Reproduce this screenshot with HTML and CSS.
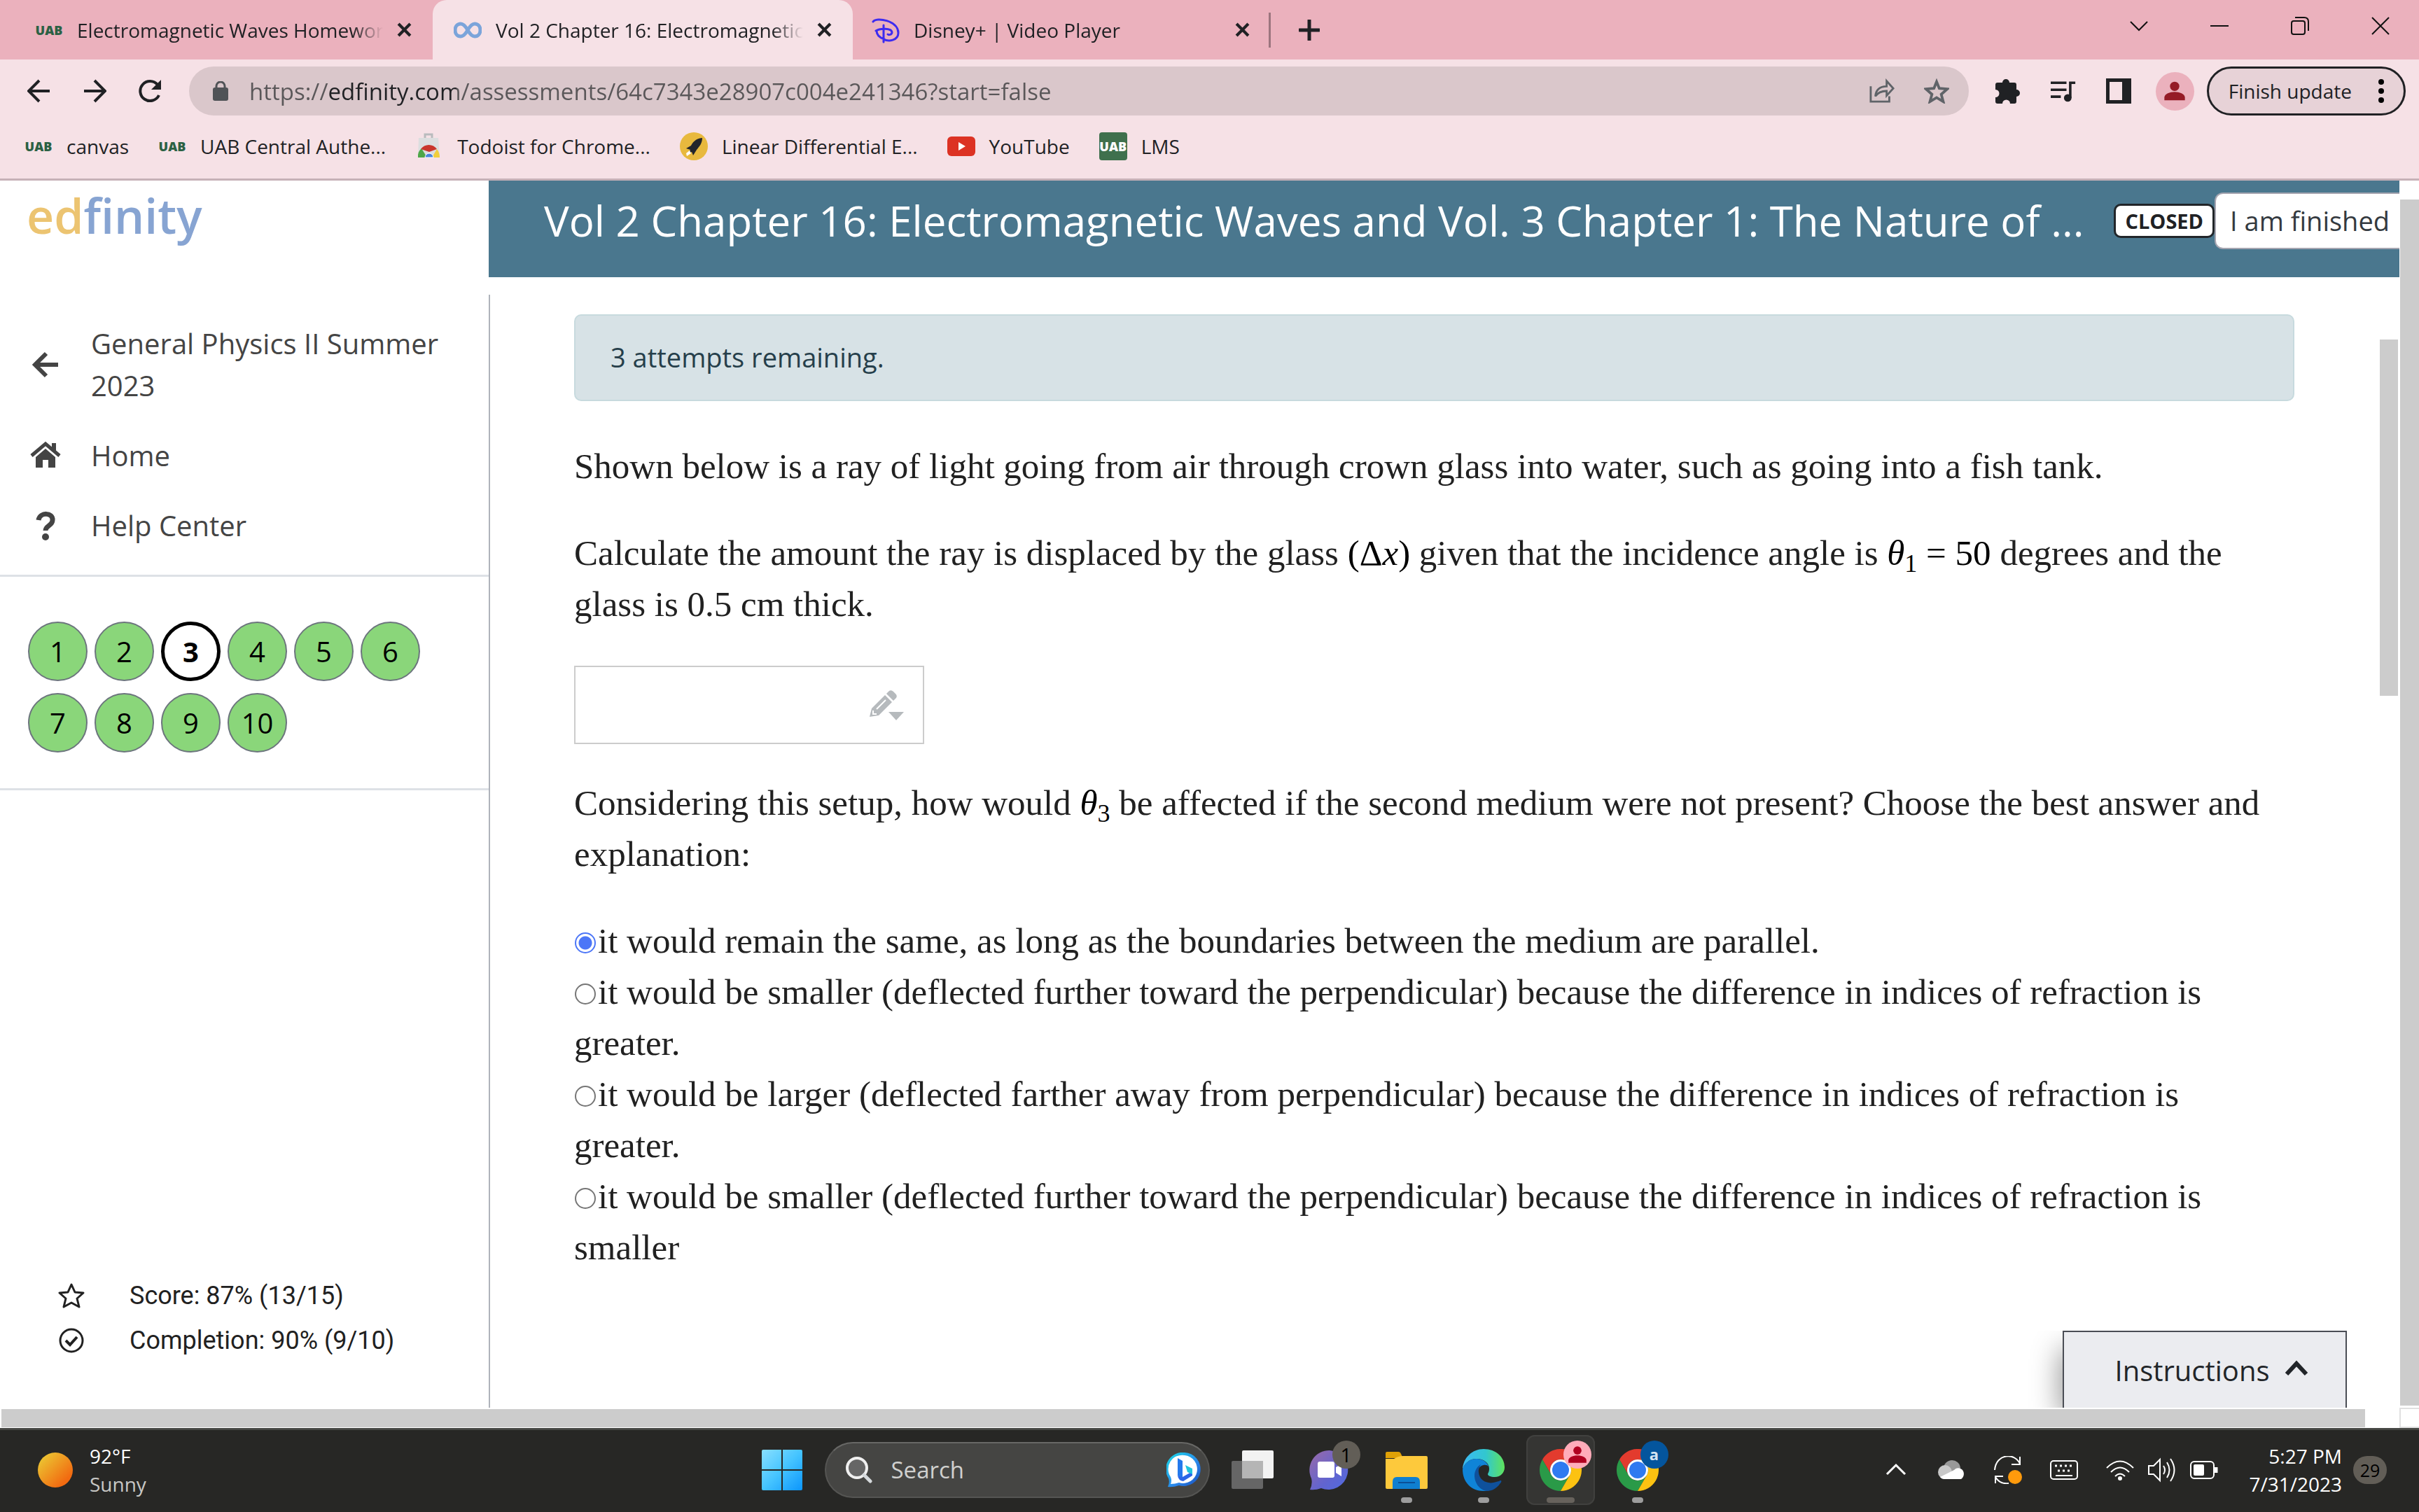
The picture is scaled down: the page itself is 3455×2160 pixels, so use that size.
FILE: index.html
```html
<!DOCTYPE html>
<html lang="en">
<head>
    <meta charset="UTF-8">
    <meta name="viewport" content="width=device-width, initial-scale=1.0">
    <title>Vol 2 Chapter 16: Electromagnetic Waves</title>
    <link rel="stylesheet" href="styles.css">
</head>
<body>
    <!-- Shared icons -->
    <svg class="sprite" aria-hidden="true">
        <symbol id="i-close" viewBox="0 0 20 20"><path d="M2 2l16 16M18 2L2 18" fill="none" stroke="#202124" stroke-width="4"/></symbol>
        <symbol id="i-chrome" viewBox="0 0 60 60">
            <path d="M4 15A30 30 0 0 1 56 15H30A15 15 0 0 0 17 37.500z" fill="#e33b2e"/>
            <path d="M4 15L17 37.500A15 15 0 0 0 43 37.500L30 60A30 30 0 0 1 4 15z" fill="#2a9a48"/>
            <path d="M56 15H30A15 15 0 0 1 43 37.500L30 60A30 30 0 0 0 56 15z" fill="#fcc211"/>
            <circle cx="30" cy="30" r="15" fill="#fff"/><circle cx="30" cy="30" r="12" fill="#2f7af0"/>
        </symbol>
        <symbol id="i-person" viewBox="0 0 24 24"><circle cx="12" cy="7" r="5"/><path d="M1 22v-3c0-4 6-6 11-6s11 2 11 6v3z"/></symbol>
    </svg>

    <header class="browser">
        <div class="tabs">
            <div class="tab">
                <span class="uab">UAB</span>
                <span class="tab-title">Electromagnetic Waves Homework</span>
                <button class="tab-close" aria-label="Close tab"><svg><use href="#i-close"/></svg></button>
            </div>
            <div class="tab active">
                <svg class="fav" viewBox="0 0 40 40"><path d="M20 20c-4-7-7-9-10-9-5 0-8 4-8 9s3 9 8 9c3 0 6-2 10-9s7-9 10-9c5 0 8 4 8 9s-3 9-8 9c-3 0-6-2-10-9z" fill="none" stroke="#7ba4da" stroke-width="5"/></svg>
                <span class="tab-title">Vol 2 Chapter 16: Electromagnetic Waves</span>
                <button class="tab-close" aria-label="Close tab"><svg><use href="#i-close"/></svg></button>
            </div>
            <div class="tab">
                <svg class="fav" viewBox="0 0 40 40"><path d="M2 8C6 1 38 6 38 24c0 11-14 13-21 9M6 21c6-4 22-4 23 2 0 4-5 4-6 3M7 21c0 6 5 10 11 12M17 13v24" fill="none" stroke="#3d2bf0" stroke-width="3" stroke-linecap="round"/></svg>
                <span class="tab-title">Disney+ | Video Player</span>
                <button class="tab-close" aria-label="Close tab"><svg><use href="#i-close"/></svg></button>
            </div>
            <button class="new-tab" aria-label="New tab"><svg viewBox="0 0 30 30"><path d="M15 1v28M1 15h28" stroke="#202124" stroke-width="5" stroke-linecap="round"/></svg></button>
            <div class="window-buttons">
                <button aria-label="Search tabs"><svg viewBox="0 0 26 26"><path d="M1 7l12 12L25 7"/></svg></button>
                <button aria-label="Minimize"><svg viewBox="0 0 26 26"><path d="M0 13h26"/></svg></button>
                <button aria-label="Restore"><svg viewBox="0 0 26 26"><rect x="1" y="6" width="19" height="19" rx="3"/><path d="M6 1h13q6 0 6 6v13"/></svg></button>
                <button aria-label="Close"><svg viewBox="0 0 26 26"><path d="M1 1l24 24M25 1L1 25"/></svg></button>
            </div>
        </div>

        <div class="toolbar">
            <button class="tool nav" aria-label="Back"><svg viewBox="0 0 34 34"><path d="M32 17H3M17 2L2 17l15 15" fill="none" stroke="#202124" stroke-width="4"/></svg></button>
            <button class="tool nav" aria-label="Forward"><svg viewBox="0 0 34 34"><path d="M2 17h29M17 2l15 15-15 15" fill="none" stroke="#202124" stroke-width="4"/></svg></button>
            <button class="tool nav" aria-label="Reload"><svg viewBox="0 0 34 34"><path d="M30 23A14 14 0 1 1 28 8" fill="none" stroke="#202124" stroke-width="4"/><path d="M33 1v14H19z" fill="#202124"/></svg></button>
            <div class="address">
                <svg class="lock" viewBox="0 0 22 28"><rect y="9" width="22" height="19" rx="3" fill="#505357"/><path d="M5 11V7a6 6 0 0 1 12 0v4" fill="none" stroke="#505357" stroke-width="3"/></svg>
                <input class="url" type="text" aria-label="Address" value="https://edfinity.com/assessments/64c7343e28907c004e241346?start=false">
                <button class="tool grey" aria-label="Share"><svg viewBox="0 0 38 36"><path d="M2 11v23h28v-8M9 26c1-11 8-15 17-15V3l10 11-10 11v-7c-8 0-13 2-17 8z" fill="none" stroke="#5f6368" stroke-width="3"/></svg></button>
                <button class="tool grey" aria-label="Bookmark"><svg viewBox="0 0 38 36"><path d="M19 4l4 10 12 1-9 8 3 11-10-6-10 6 3-11-9-8 12-1z" fill="none" stroke="#5f6368" stroke-width="4"/></svg></button>
            </div>
            <div class="extensions">
                <button class="tool" aria-label="Extensions"><svg viewBox="0 0 36 36"><path d="M10 6a5 5 0 0 1 10 0h7q3 0 3 3v7a5 5 0 0 1 0 10v7q0 3-3 3h-6a5 5 0 0 0-11 0H3q-3 0-3-3v-6a5 5 0 0 0 0-11V9q0-3 3-3z" fill="#202124"/></svg></button>
                <button class="tool" aria-label="Media"><svg viewBox="0 0 40 36"><path d="M0 5h25M0 16h25M0 27h16" stroke="#202124" stroke-width="4"/><path d="M31 29V5h8" fill="none" stroke="#202124" stroke-width="4"/><circle cx="27" cy="29" r="6" fill="#202124"/></svg></button>
                <button class="tool" aria-label="Side panel"><svg viewBox="0 0 36 36"><path d="M0 0h36v36H0zM5 5v26h18V5z" fill="#202124" fill-rule="evenodd"/></svg></button>
                <button class="avatar" aria-label="Profile"><svg viewBox="0 0 24 24"><use href="#i-person"/></svg></button>
            </div>
            <button class="update">Finish update<svg viewBox="0 0 8 34"><circle cx="4" cy="4" r="4"/><circle cx="4" cy="17" r="4"/><circle cx="4" cy="30" r="4"/></svg></button>
        </div>

        <nav class="bookmarks">
            <a href="#"><span class="uab">UAB</span>canvas</a>
            <a href="#"><span class="uab">UAB</span>UAB Central Authe...</a>
            <a href="#"><svg class="fav" viewBox="0 0 40 40"><path d="M14 8V3h10v5" fill="none" stroke="#b9bbbd" stroke-width="3"/><path d="M5 8h28l2 28H4z" fill="#dcdedf"/><path d="M4 36a15 15 0 0 1 5-13l8 13z" fill="#4fa648"/><path d="M8 24a14 14 0 0 1 23 0l-11 4z" fill="#c9362c"/><path d="M31 24q4 5 4 12H24z" fill="#f0ce3c"/><path d="M14 36a6 6 0 0 1 12 0z" fill="#4b86dd" stroke="#fff"/></svg>Todoist for Chrome...</a>
            <a href="#"><svg class="fav" viewBox="0 0 40 40"><circle cx="20" cy="20" r="20" fill="#e8b93e"/><path d="M32 8C22 9 18 15 16 19l-7 4 6 2-3 5 5-2 2 5 5-8c4-5 8-9 8-17z" fill="#23252b"/><path d="M9 30l5-4 2 4-6 4z" fill="#fff"/></svg>Linear Differential E...</a>
            <a href="#"><svg class="fav" viewBox="0 0 40 40"><rect y="6" width="40" height="28" rx="6" fill="#dc3223"/><path d="M16 14l10 6-10 6z" fill="#fff"/></svg>YouTube</a>
            <a href="#"><span class="uab tile">UAB</span>LMS</a>
        </nav>
    </header>

    <div class="page">
        <div class="site">
            <aside class="sidebar">
                <a class="logo" href="#"><span>ed</span>finity</a>
                <div class="side-body">
                    <nav class="side-nav">
                        <a href="#"><svg viewBox="0 0 44 44"><path d="M40 22H8M23 6L7 22l16 16" fill="none" stroke="#444" stroke-width="6"/></svg>General Physics II Summer 2023</a>
                        <a href="#"><svg viewBox="0 0 44 44"><path d="M2 22L22 5l20 17" fill="none" stroke="#444" stroke-width="5"/><path d="M31 4h6v12l-6-5zM8 24l14-12 14 12v15H26V28h-8v11H8z" fill="#444"/></svg>Home</a>
                        <a href="#"><svg viewBox="0 0 44 44"><path d="M12 14c2-12 21-11 20 0 0 8-10 8-10 15" fill="none" stroke="#444" stroke-width="7"/><circle cx="22" cy="38" r="5" fill="#444"/></svg>Help Center</a>
                    </nav>
                    <div class="questions">
                        <button>1</button><button>2</button><button class="current">3</button><button>4</button><button>5</button><button>6</button>
                        <button>7</button><button>8</button><button>9</button><button>10</button>
                    </div>
                    <div class="stats">
                        <p><svg viewBox="0 0 38 38"><path d="M19 3l5 11 12 1-9 8 3 12-11-6-11 6 3-12-9-8 12-1z" stroke-linejoin="round"/></svg>Score: 87% (13/15)</p>
                        <p><svg viewBox="0 0 38 38"><circle cx="19" cy="19" r="16"/><path d="M11 19l6 6 10-11" stroke-width="4"/></svg>Completion: 90% (9/10)</p>
                    </div>
                </div>
            </aside>

            <section class="content">
                <header class="title-bar">
                    <h1>Vol 2 Chapter 16: Electromagnetic Waves and Vol. 3 Chapter 1: The Nature of ...</h1>
                    <span class="badge">CLOSED</span>
                    <button class="finished">I am finished</button>
                </header>
                <div class="scroll-area">
                    <main>
                        <div class="alert">3 attempts remaining.</div>
                        <p>Shown below is a ray of light going from air through crown glass into water, such as going into a fish tank.</p>
                        <p>Calculate the amount the ray is displaced by the glass <span class="math">(Δ<i>x</i>)</span> given that the incidence angle is <span class="math"><i>θ</i><sub>1</sub> = 50</span> degrees and the<br>glass is 0.5 cm thick.</p>
                        <div class="answer">
                            <input type="text" aria-label="Answer">
                            <button aria-label="Open editor"><svg viewBox="0 0 50 46"><path d="M0 38l3-12L22 7l10 10-19 19zM24 5l4-4q3-2 6 1l3 3q3 3 1 6l-4 4z" fill="#b6babd"/><path d="M10 27l13-13M5 29v5h5" fill="none" stroke="#fff" stroke-width="2"/><path d="M27 31h22L38 43z" fill="#b6babd"/></svg></button>
                        </div>
                        <p>Considering this setup, how would <span class="math"><i>θ</i><sub>3</sub></span> be affected if the second medium were not present? Choose the best answer and<br>explanation:</p>
                        <div class="options">
                            <label><input type="radio" name="choice" checked>it would remain the same, as long as the boundaries between the medium are parallel.</label>
                            <label><input type="radio" name="choice">it would be smaller (deflected further toward the perpendicular) because the difference in indices of refraction is<br>greater.</label>
                            <label><input type="radio" name="choice">it would be larger (deflected farther away from perpendicular) because the difference in indices of refraction is<br>greater.</label>
                            <label><input type="radio" name="choice">it would be smaller (deflected further toward the perpendicular) because the difference in indices of refraction is<br>smaller</label>
                        </div>
                    </main>
                    <div class="inner-scroll"></div>
                    <button class="instructions">Instructions <svg viewBox="0 0 34 34"><path d="M3 23L17 8l14 15" fill="none" stroke="#212529" stroke-width="6"/></svg></button>
                </div>
            </section>
        </div>
        <div class="scroll-y"></div>
        <div class="scroll-x"></div>
        <div class="scroll-corner"></div>
    </div>

    <footer class="taskbar">
        <div class="weather"><span class="sun"></span><div>92°F<br><span>Sunny</span></div></div>
        <div class="apps">
            <button class="app" aria-label="Start"><svg viewBox="0 0 60 60">
                <defs><linearGradient id="win" gradientUnits="userSpaceOnUse" x1="0" y1="0" x2="60" y2="60"><stop offset="0" stop-color="#8be0ff"/><stop offset=".5" stop-color="#45c4ff"/><stop offset="1" stop-color="#0a94fc"/></linearGradient></defs>
                <path d="M1 3q0-2 2-2h26v28H1zM31 1h26q2 0 2 2v26H31zM1 31h28v28H3q-2 0-2-2zM31 31h28v26q0 2-2 2H31z" fill="url(#win)"/></svg></button>
            <div class="search">
                <svg viewBox="0 0 38 38"><circle cx="16" cy="16" r="14" fill="#666" stroke="#f0f0f0" stroke-width="4"/><path d="M26 26l9 9" stroke="#d5d9dc" stroke-width="5" stroke-linecap="round"/></svg>
                <input type="text" placeholder="Search" aria-label="Search">
                <svg class="bing" viewBox="0 0 50 50">
                    <defs><linearGradient id="bing" x1="0" y1="0" x2="1" y2="1"><stop offset="0" stop-color="#19dbe6"/><stop offset=".6" stop-color="#2a86ea"/><stop offset="1" stop-color="#174ab8"/></linearGradient></defs>
                    <path d="M26 0a24 24 0 1 1-8 47Q9 50 2 49q3-6 1-12A24 24 0 0 1 26 0z" fill="url(#bing)"/><path d="M26 4a20 20 0 1 1-8 39q-6 2-12 2 2-5 0-10A20 20 0 0 1 26 4z" fill="#fff"/>
                    <path d="M16 8l7 4v24l-7-3z" fill="#2479ec"/><path d="M16 33l7 2 14-8v6L24 41q-7-1-8-8z" fill="#2b66e8"/><path d="M27 18l10 5v8l-7-3z" fill="#20c4dc"/></svg>
            </div>
            <button class="app" aria-label="Task view"><svg viewBox="0 0 60 60"><rect x="15" y="2" width="45" height="40" rx="2" fill="#f2f2f2"/><rect y="17" width="45" height="40" rx="2" fill="#777" fill-opacity=".8"/><rect x="15" y="17" width="30" height="25" fill="#b5b5b5"/></svg></button>
            <button class="app" aria-label="Chat"><svg viewBox="0 0 60 60">
                <defs><linearGradient id="chat" x1="0" y1="0" x2="1" y2="1"><stop offset="0" stop-color="#9a6aa8"/><stop offset=".6" stop-color="#6264cf"/><stop offset="1" stop-color="#4f6be0"/></linearGradient></defs>
                <path d="M30 2a28 28 0 1 1-12 54Q10 59 2 58q4-8 2-16A28 28 0 0 1 30 2z" fill="url(#chat)"/><rect x="13" y="18" width="24" height="23" rx="3" fill="#fff"/><path d="M39 26l8-4v17l-8-5z" fill="#fff"/></svg><span class="count">1</span></button>
            <button class="app running" aria-label="File Explorer"><svg viewBox="0 0 60 60"><path d="M0 6q0-2 2-2h16q3 0 4 3l3 6H0z" fill="#e0a106"/><path d="M0 14h12q6-4 13-4h33q2 0 2 2v43q0 2-2 2H2q-2 0-2-2z" fill="#fdc93c"/><path d="M10 57V47q0-7 6-7h27q6 0 6 7v10z" fill="#0f7fd0"/><path d="M18 48h24" stroke="#0b4f97" stroke-width="2"/></svg></button>
            <button class="app running" aria-label="Edge"><svg viewBox="0 0 60 60">
                <defs><linearGradient id="edge" x1="0" y1="0" x2="1" y2="0"><stop offset="0" stop-color="#3bb9f5"/><stop offset=".55" stop-color="#32c7cf"/><stop offset="1" stop-color="#5fe35c"/></linearGradient></defs>
                <path d="M0 29C1 12 14 0 30 0c18 0 30 12 30 26 0 8-6 14-14 14-6 0-10-2-10-4 0-1 2-3 2-8 0-8-8-14-18-14C10 14 3 20 0 29z" fill="url(#edge)"/>
                <path d="M0 29c3-9 10-15 20-15 9 0 15 5 17 11-3-4-11-3-15 4-3 7 0 23 16 30-2 1-5 1-8 1C12 60 0 47 0 29z" fill="#0f84d8"/>
                <path d="M17 38c0-8 5-14 9-16-2 4-4 8-3 12 1 10 11 16 21 14 6-1 9-3 11-3 1 1 0 3-2 5-4 6-11 10-18 10-11-1-18-12-18-22z" fill="#0f519c"/></svg></button>
            <button class="app running focused" aria-label="Chrome"><svg><use href="#i-chrome"/></svg><span class="count pink"><svg viewBox="0 0 24 24"><use href="#i-person"/></svg></span></button>
            <button class="app running" aria-label="Chrome profile a"><svg><use href="#i-chrome"/></svg><span class="count blue">a</span></button>
        </div>
        <div class="tray">
            <svg viewBox="0 0 40 40"><path d="M7 26l13-13 13 13" stroke-width="3"/></svg>
            <svg viewBox="0 0 40 40"><circle cx="20" cy="18" r="12" fill="#999" stroke="none"/><circle cx="10" cy="23" r="10" fill="#c8c8c8" stroke="none"/><path d="M3 30l20-10q5-5 11-1a9 9 0 0 1-1 14H9q-4 0-6-3z" fill="#fff" stroke="none"/></svg>
            <svg viewBox="0 0 40 40"><path d="M1 20C3-4 30-5 37 11M37 1v11H25M2 39V29h11M2 30c4 7 11 10 19 9"/><circle cx="30" cy="30" r="10" fill="#ff9a0c" stroke="none"/></svg>
            <svg viewBox="0 0 40 40"><rect x="1" y="7" width="38" height="26" rx="4"/><path d="M7 14h26M11 21h20" stroke-dasharray="3 4" stroke-width="3"/><path d="M8 28h24"/></svg>
            <svg class="wifi" viewBox="0 0 40 40"><path d="M1 17q19-19 38 0M7 23q13-13 26 0M13 29q7-7 14 0"/><circle cx="20" cy="32" r="3" fill="#fff" stroke="none"/></svg>
            <svg viewBox="0 0 40 40"><path d="M1 14h7l9-9v30l-9-9H1zM22 14q4 6 0 12M27 9q7 11 0 22M32 4q11 16 0 32"/></svg>
            <svg viewBox="0 0 40 40"><rect x="1" y="8" width="33" height="24" rx="5"/><rect x="5" y="12" width="15" height="16" rx="2" fill="#fff" stroke="none"/><path d="M37 16v8" stroke-width="5"/></svg>
            <div class="clock">5:27 PM<br>7/31/2023</div>
            <span class="notify">29</span>
        </div>
    </footer>
</body>
</html>
```

FILE: styles.css
```css
* { box-sizing: border-box; }
body { margin: 0; min-height: 100vh; display: flex; flex-direction: column; font-family: "Open Sans", sans-serif; color: #202124; background: #fff; overflow: hidden; }
button { font: inherit; color: inherit; background: none; border: 0; padding: 0; cursor: pointer; flex-shrink: 0; }
input { font: inherit; }
a { color: inherit; text-decoration: none; }
svg { display: block; flex-shrink: 0; }
.sprite { display: none; }

/* Browser chrome */
.browser { background: #f6e1e6; border-bottom: 3px solid #c6b1b7; font-size: 28px; }
.tabs { display: flex; height: 85px; background: #ebb1bd; }
.tab { display: flex; align-items: center; gap: 20px; width: 600px; padding: 0 30px; }
.tab:first-child { width: 618px; padding-left: 50px; border-bottom-right-radius: 20px; }
.tab.active { background: #f6e1e6; border-radius: 20px 20px 0 0; }
.tab:nth-child(3) { border-bottom-left-radius: 20px; width: 597px; padding-left: 27px; position: relative; }
.tab:nth-child(3)::after { content: ""; position: absolute; right: 0; top: 18px; width: 3px; height: 50px; background: #9c757e; }
.tab-title { flex: 1; white-space: nowrap; overflow: hidden; mask-image: linear-gradient(90deg, #000 90%, transparent); }
.tab-close svg { width: 21px; height: 21px; }
.fav { width: 40px; height: 40px; }
.uab { width: 40px; flex-shrink: 0; font-size: 18px; font-weight: 800; line-height: 40px; text-align: center; color: #2b6144; }
.uab.tile { background: #3f704d; color: #fff; border-radius: 4px; }
.new-tab { padding: 0 40px; }
.new-tab svg { width: 30px; height: 30px; }
.window-buttons { display: flex; margin-left: auto; padding: 24px 42px 0 0; gap: 89px; align-items: flex-start; }
.window-buttons svg { width: 26px; height: 26px; fill: none; stroke: #111; stroke-width: 2; }

.toolbar { display: flex; align-items: center; padding: 10px 19px 0 39px; }
.tool svg { width: 36px; height: 36px; }
.nav { margin-right: 45px; }
.nav svg { width: 34px; height: 34px; }
.address { flex: 1; display: flex; align-items: center; gap: 42px; height: 70px; padding: 0 28px 0 34px; margin-left: -6px; background: #dac7cb; border-radius: 35px; }
.lock { width: 22px; height: 28px; }
/* scheme and path are grey, the host is dark */
.url { flex: 1; border: 0; padding: 0; margin-left: -12px; font-size: 33px; color: transparent; background: linear-gradient(90deg, #5a5759 0 112px, #202124 112px 296px, #5a5759 296px); background-clip: text; -webkit-background-clip: text; }
.extensions { display: flex; align-items: center; gap: 43px; padding: 0 18px 0 38px; }
.avatar { width: 55px; height: 55px; border-radius: 50%; background: #ebb1bd; margin-left: -8px; }
.avatar svg { width: 32px; height: 32px; margin: auto; fill: #951b26; }
.update { display: flex; align-items: center; gap: 38px; height: 70px; padding: 0 28px 0 28px; border: 3px solid #202124; border-radius: 35px; background: #e7d2d7; }
.update svg { width: 8px; height: 34px; }
.bookmarks { display: flex; align-items: center; gap: 42px; height: 90px; padding: 0 0 2px 35px; }
.bookmarks a { display: flex; align-items: center; gap: 20px; white-space: nowrap; }

/* Page and scrollbars */
.page { flex: 1; display: grid; grid-template-columns: 1fr 28px; grid-template-rows: 1fr 29px; }
.scroll-y { background: #ccc; margin: 27px 0 3px 1px; }
.scroll-x { background: #ccc; margin: 2px 49px 1px 2px; }
.scroll-corner { border: 2px solid #e0e0e0; border-right: 0; }
.site { display: grid; grid-template-columns: 698px 1fr; overflow: hidden; }

.sidebar { display: flex; flex-direction: column; }
.logo { height: 163px; padding: 5px 0 0 38px; font-size: 68px; font-weight: 600; line-height: 90px; color: #87a4d2; }
.logo span { color: #ecc471; }
.side-body { flex: 1; display: flex; flex-direction: column; }
.side-nav { display: flex; flex-direction: column; gap: 40px; padding: 40px 50px 40px 43px; border-bottom: 3px solid #dde1e6; }
.side-nav a { display: flex; align-items: center; gap: 43px; font-size: 40px; line-height: 60px; color: #444; }
.side-nav svg { width: 44px; height: 44px; }
.questions { display: flex; flex-wrap: wrap; gap: 17px 10px; padding: 64px 40px 51px; border-bottom: 3px solid #dde1e6; }
.questions button { width: 85px; height: 85px; border: 2px solid #6c757d; border-radius: 50%; background: #8ad67a; color: #000; font-size: 40px; }
.questions .current { border: 5px solid #000; background: #fff; font-weight: 700; }
.stats { margin-top: auto; padding: 0 0 64px 83px; font-family: Roboto, sans-serif; font-size: 36px; line-height: 64px; color: #212121; }
.stats p { display: flex; align-items: center; gap: 64px; margin: 0; }
.stats svg { width: 38px; height: 38px; fill: none; stroke: #212121; stroke-width: 3; }

.content { display: flex; flex-direction: column; min-width: 0; }
.title-bar { display: flex; align-items: center; height: 138px; padding: 0 0 24px 79px; background: #4a778e; overflow: hidden; }
.title-bar h1 { flex: 1; margin: 0; font-size: 60px; font-weight: 400; line-height: 82px; color: #fff; white-space: nowrap; }
.badge { padding: 0 13px; border: 3px solid #212529; border-radius: 10px; background: #fff; font-size: 29px; font-weight: 700; line-height: 43px; }
.finished { height: 81px; padding: 0 14px 0 20px; border: 2px solid #a5a5b0; border-right: 0; border-radius: 12px 0 0 12px; background: #fff; font-size: 38px; color: #343a40; }
.scroll-area { flex: 1; display: flex; position: relative; margin-top: 25px; border-left: 2px solid #afb3bb; }
.inner-scroll { width: 26px; height: 509px; margin: 64px 2px 0 0; background: #ccc; }

main { flex: 1; padding: 28px 122px 0 120px; font-family: "Liberation Serif", serif; font-size: 51px; line-height: 73px; color: #212121; }
main p { margin: 0 0 51px; }
.alert { height: 124px; padding: 0 50px; margin-bottom: 57px; border: 2px solid #c7dade; border-radius: 10px; background: #d7e2e6; font-family: "Open Sans", sans-serif; font-size: 38px; line-height: 118px; color: #263f4b; }
.math { color: #000; white-space: nowrap; }
.math sub { font-size: 36px; line-height: 1; vertical-align: -10px; }
.answer { display: flex; align-items: center; width: 500px; height: 112px; margin-bottom: 48px; padding: 4px 26px 0 0; border: 2px solid #ccc; }
.answer input { flex: 1; min-width: 0; height: 100%; border: 0; padding: 0 20px; background: none; }
.answer svg { width: 50px; height: 46px; }
.options label { display: block; }
.options input { appearance: none; width: 30px; height: 30px; margin: 0 3px 0 1px; border: 2px solid #767676; border-radius: 50%; vertical-align: -1px; }
.options input:checked { border-color: #4c76f7; background: radial-gradient(circle, #4c76f7 9px, #fff 10px); }
.instructions { position: absolute; right: 75px; bottom: 0; display: flex; align-items: center; justify-content: center; gap: 21px; width: 406px; height: 110px; padding-left: 19px; border: 2px solid #4a4d55; border-bottom: 0; background: #ebecf0; box-shadow: -10px 20px 40px -6px #999; font-size: 40px; color: #212529; clip-path: inset(0 0 0 -60px); }
.instructions svg { width: 34px; height: 34px; }

/* Taskbar */
.taskbar { display: grid; grid-template-columns: 1fr auto 1fr; align-items: center; height: 120px; padding-bottom: 3px; border-top: 3px solid #464744; background: #272725; color: #fff; font-size: 28px; line-height: 40px; }
.weather { display: flex; align-items: center; gap: 24px; padding-left: 54px; }
.weather div span { color: #c8c8c5; }
.sun { width: 50px; height: 50px; border-radius: 50%; background: linear-gradient(135deg, #ecc030 15%, #f26a10 80%); }
.apps { display: flex; align-items: center; gap: 12px; }
.app { position: relative; width: 98px; height: 100px; border-radius: 12px; }
.app > svg { width: 60px; height: 60px; margin: auto; }
.running::after { content: ""; position: absolute; left: 41px; bottom: 3px; width: 16px; height: 8px; border-radius: 4px; background: #9d9d9d; }
.focused { background: #353533; box-shadow: inset 0 0 0 2px #40403e; }
.focused::after { left: 29px; width: 40px; background: #67625c; }
.count { position: absolute; right: 5px; top: 8px; width: 40px; height: 40px; border-radius: 50%; background: #625e57; color: #000; font-size: 28px; line-height: 40px; text-align: center; }
.count svg { width: 28px; height: 28px; margin: 6px; fill: #b00020; }
.count.pink { background: #ffacba; }
.count.blue { background: #04559d; color: #d5e4f2; font-size: 22px; font-weight: 700; line-height: 38px; }
.search { display: flex; align-items: center; gap: 27px; width: 550px; height: 80px; padding: 0 10px 0 28px; border: 2px solid #555553; border-top-color: #686866; border-radius: 40px; background: #454543; }
.search svg { width: 38px; height: 38px; }
.search .bing { width: 50px; height: 50px; }
.search input { flex: 1; min-width: 0; border: 0; padding: 0; background: none; font-size: 33px; color: #fff; }
.search input::placeholder { color: #d0d0ce; opacity: 1; }
.tray { display: flex; align-items: center; justify-content: flex-end; gap: 40px; padding-right: 46px; }
.tray svg { width: 40px; height: 40px; fill: none; stroke: #fff; stroke-width: 2; }
.tray .wifi, .tray .wifi + svg { margin-right: -20px; }
.clock { width: 137px; text-align: right; white-space: nowrap; }
.notify { width: 48px; margin-left: -24px; border-radius: 20px; background: #625e57; color: #000; font-size: 25px; text-align: center; }
```
